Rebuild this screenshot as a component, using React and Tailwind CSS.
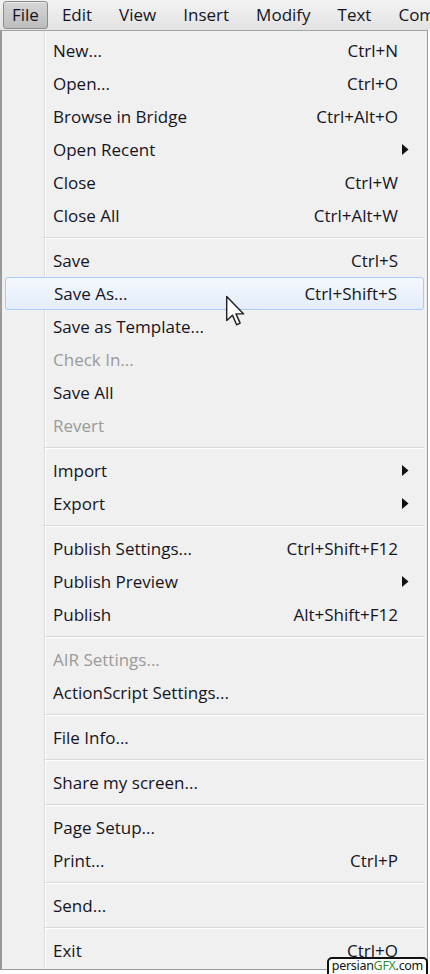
import React from "react";

const items = [
  { t: "New...", s: "Ctrl+N" },
  { t: "Open...", s: "Ctrl+O" },
  { t: "Browse in Bridge", s: "Ctrl+Alt+O" },
  { t: "Open Recent", sub: true },
  { t: "Close", s: "Ctrl+W" },
  { t: "Close All", s: "Ctrl+Alt+W" },
  "sep",
  { t: "Save", s: "Ctrl+S" },
  { t: "Save As...", s: "Ctrl+Shift+S", hl: true },
  { t: "Save as Template..." },
  { t: "Check In...", dis: true },
  { t: "Save All" },
  { t: "Revert", dis: true },
  "sep",
  { t: "Import", sub: true },
  { t: "Export", sub: true },
  "sep",
  { t: "Publish Settings...", s: "Ctrl+Shift+F12" },
  { t: "Publish Preview", sub: true },
  { t: "Publish", s: "Alt+Shift+F12" },
  "sep",
  { t: "AIR Settings...", dis: true },
  { t: "ActionScript Settings..." },
  "sep",
  { t: "File Info..." },
  "sep",
  { t: "Share my screen..." },
  "sep",
  { t: "Page Setup..." },
  { t: "Print...", s: "Ctrl+P" },
  "sep",
  { t: "Send..." },
  "sep",
  { t: "Exit", s: "Ctrl+Q" },
];

const bar = ["Edit", "View", "Insert", "Modify", "Text", "Commands"];

function Arrow() {
  return (
    <svg width="7" height="11" viewBox="0 0 7 11" className="block">
      <path d="M0 0 L6.5 5.5 L0 11 Z" fill="#111" />
    </svg>
  );
}

function Row({ it }) {
  const base =
    "relative h-[33px] mx-[3px] flex items-center pl-[48px] pr-[26px] text-[17px] whitespace-nowrap";
  const hl = it.hl
    ? " rounded-[3px] border border-[#a8ccf5] bg-[linear-gradient(to_bottom,#f4f8fd,#e3edfa)] pl-[47px] pr-[25px]"
    : "";
  return (
    <div className={base + hl}>
      <span className={it.dis ? "text-[#9a9a9a]" : "text-[#15151f]"}>{it.t}</span>
      <span className="flex-1" />
      {it.s && <span className="text-[#15151f]">{it.s}</span>}
      {it.sub && (
        <span className="mr-[-11px]">
          <Arrow />
        </span>
      )}
      {it.hl && (
        <svg
          width="21"
          height="32"
          viewBox="0 0 13 20"
          className="absolute left-[219px] top-[17px]"
        >
          <path
            d="M1 1 L1 16 L4.6 12.6 L7.2 18.6 L9.4 17.6 L6.8 11.8 L11.6 11.8 Z"
            fill="#fff"
            stroke="#222"
            strokeWidth="0.9"
            strokeLinejoin="round"
          />
        </svg>
      )}
    </div>
  );
}

export default function App() {
  return (
    <div
      className="relative w-[430px] h-[974px] bg-white overflow-hidden"
      style={{ fontFamily: '"Open Sans", "Noto Sans", sans-serif' }}
    >
      <div className="h-[30px] flex items-center overflow-hidden bg-[linear-gradient(to_bottom,#f3f3f3,#e2e2e2)] text-[17px] text-[#15151f] whitespace-nowrap">
        <div className="ml-[3px] h-[28px] px-[8px] flex items-center rounded-[3px] border border-[#8c8c8c] bg-[linear-gradient(to_bottom,#d6d6d6,#bdbdbd)] shadow-[inset_0_1px_0_#e8e8e8]">
          File
        </div>
        <div className="flex items-center gap-[27px] ml-[14px]">
          {bar.map((b) => (
            <span key={b}>{b}</span>
          ))}
        </div>
      </div>
      <div className="w-[428px] border-t border-[#a3a3a3] border-l-2 border-l-[#9a9a9a] border-r border-r-[#9a9a9a] border-b border-b-[#9a9a9a] pt-[3px] pb-[2px] bg-[linear-gradient(to_right,#f0f0f0_42px,#dcdcdc_42px,#dcdcdc_43px,#ffffff_43px,#ffffff_44px,#f0f0f0_44px)]">
        {items.map((it, i) =>
          it === "sep" ? (
            <div key={i} className="h-[12px] ml-[43px] mr-[3px] pt-[5px]">
              <div className="h-[1px] bg-[#d8d8d8]" />
              <div className="h-[1px] bg-white" />
            </div>
          ) : (
            <Row key={i} it={it} />
          )
        )}
      </div>
      <div
        className="absolute right-[2px] top-[957px] h-[22px] px-[3px] pb-[4px] flex items-center rounded-[5px] border-2 border-[#111] bg-white text-[12.5px] leading-none tracking-[-0.3px]"
        style={{ fontFamily: '"Noto Sans", sans-serif' }}
      >
        <span className="text-[#111]">persian</span>
        <span className="text-[#2f8f2f]">GFX</span>
        <span className="text-[#111]">.com</span>
      </div>
    </div>
  );
}
